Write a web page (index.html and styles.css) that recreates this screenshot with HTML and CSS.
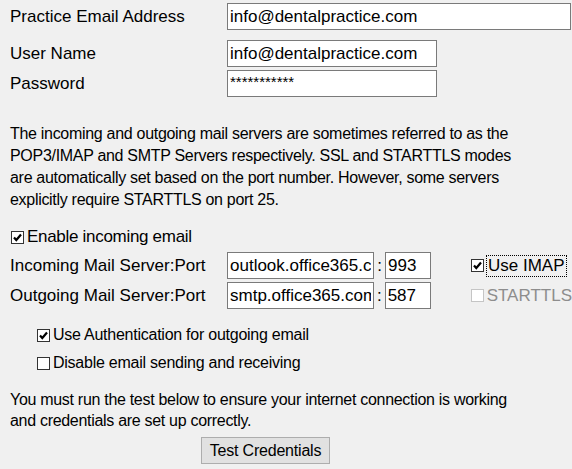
FILE: index.html
```html
<!DOCTYPE html>
<html lang="en">
<head>
    <meta charset="UTF-8">
    <title>Email Settings</title>
    <link rel="stylesheet" href="styles.css">
</head>
<body>
    <main class="settings">
        <!-- account -->
        <div class="row row-first">
            <label class="field-label">Practice Email Address</label>
            <input class="box box-wide" type="text" value="info@dentalpractice.com">
        </div>
        <div class="row row-user">
            <label class="field-label">User Name</label>
            <input class="box box-mid" type="text" value="info@dentalpractice.com">
        </div>
        <div class="row row-pass">
            <label class="field-label">Password</label>
            <input class="box box-mid pass" type="text" value="***********">
        </div>

        <p class="note">The incoming and outgoing mail servers are sometimes referred to as the POP3/IMAP and SMTP Servers respectively. SSL and STARTTLS modes are automatically set based on the port number. However, some servers explicitly require STARTTLS on port 25.</p>

        <!-- servers -->
        <div class="check check-enable">
            <span class="tick on"><svg viewBox="0 0 11 11"><path d="M2 5.5 L4.3 8 L9 2.5" /></svg></span>
            <span>Enable incoming email</span>
        </div>
        <div class="row row-server">
            <label class="field-label">Incoming Mail Server:Port</label>
            <input class="box box-server" type="text" value="outlook.office365.com">
            <span class="colon">:</span>
            <input class="box box-port" type="text" value="993">
            <div class="check check-side">
                <span class="tick on"><svg viewBox="0 0 11 11"><path d="M2 5.5 L4.3 8 L9 2.5" /></svg></span>
                <span class="focus">Use IMAP</span>
            </div>
        </div>
        <div class="row row-server2">
            <label class="field-label">Outgoing Mail Server:Port</label>
            <input class="box box-server" type="text" value="smtp.office365.com">
            <span class="colon">:</span>
            <input class="box box-port" type="text" value="587">
            <div class="check check-side disabled">
                <span class="tick"></span>
                <span>STARTTLS</span>
            </div>
        </div>

        <div class="check check-auth">
            <span class="tick on"><svg viewBox="0 0 11 11"><path d="M2 5.5 L4.3 8 L9 2.5" /></svg></span>
            <span class="check-text">Use Authentication for outgoing email</span>
        </div>
        <div class="check check-disable">
            <span class="tick"></span>
            <span class="check-text">Disable email sending and receiving</span>
        </div>

        <p class="note note-test">You must run the test below to ensure your internet connection is working and credentials are set up correctly.</p>
        <div class="actions">
            <button class="btn">Test Credentials</button>
        </div>
    </main>
</body>
</html>
```

FILE: styles.css
```css
body {
    margin: 0;
    padding: 0;
    background: #f0f0f0;
    font-family: "Liberation Sans", Arial, sans-serif;
    font-size: 17px;
    color: #000;
    overflow: hidden;
}
.settings {
    padding: 3px 0 0 10px;
}
.row {
    display: flex;
    align-items: center;
    height: 27px;
}
.row-user {
    margin-top: 10px;
}
.row-pass {
    margin-top: 3px;
}
.field-label {
    width: 217px;
    flex: none;
}
.box {
    box-sizing: border-box;
    height: 27px;
    margin: 0;
    padding: 0 2px;
    border: 1px solid #7a7a7a;
    background: #fff;
    font-family: inherit;
    font-size: 17px;
    color: #000;
    outline: none;
}
.box-wide {
    width: 344px;
}
.box-mid {
    width: 210px;
}
.pass {
    font-size: 15px;
    padding-bottom: 4px;
}
.box-server {
    width: 147px;
}
.colon {
    width: 11px;
    text-align: center;
}
.box-port {
    width: 46px;
}
.note {
    margin: 26px 0 0;
    width: 503px;
    font-size: 16px;
    letter-spacing: -0.3px;
    line-height: 22px;
}
.check {
    display: flex;
    align-items: center;
    gap: 3px;
}
.check-text {
    font-size: 16px;
    letter-spacing: -0.25px;
}
.tick {
    box-sizing: border-box;
    width: 13px;
    height: 13px;
    border: 1px solid #333;
    background: #fff;
    flex: none;
}
.tick svg {
    display: block;
    width: 11px;
    height: 11px;
}
.tick path {
    fill: none;
    stroke: #000;
    stroke-width: 2.2;
}
.check-enable {
    margin: 15px 0 0 1px;
    height: 22px;
    letter-spacing: -0.3px;
}
.row-server {
    margin-top: 4px;
}
.row-server2 {
    margin-top: 3px;
}
.check-side {
    margin-left: 40px;
}
.focus {
    outline: 1px dotted #000;
    padding: 0 1px;
}
.disabled {
    color: #8d8d8d;
}
.disabled .tick {
    border-color: #c5c5c5;
}
.check-auth {
    margin: 15px 0 0 27px;
    height: 22px;
}
.check-disable {
    margin: 6px 0 0 27px;
    height: 22px;
}
.note-test {
    margin-top: 15px;
    line-height: 21px;
}
.actions {
    margin-top: 6px;
    padding-left: 191px;
}
.btn {
    box-sizing: border-box;
    width: 129px;
    height: 27px;
    border: 1px solid #adadad;
    background: #e1e1e1;
    font-family: inherit;
    font-size: 16px;
    letter-spacing: -0.2px;
    color: #000;
    padding: 0;
}
```
